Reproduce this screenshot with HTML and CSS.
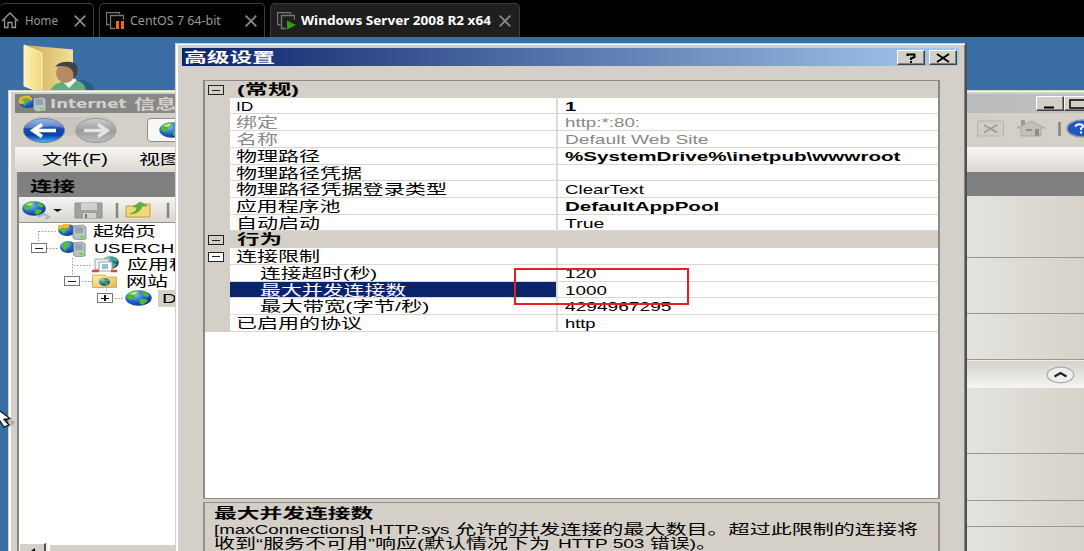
FILE: index.html
```html
<!DOCTYPE html>
<html lang="zh-CN">
<head>
<meta charset="utf-8">
<title>Windows Server 2008 R2 x64</title>
<link rel="stylesheet" href="styles.css">
</head>
<body>
<svg class="defs" width="0" height="0">
  <defs>
    <radialGradient id="globeFill" cx=".35" cy=".3" r=".8"><stop offset="0" stop-color="#8cc8f4"/><stop offset=".5" stop-color="#2469c8"/><stop offset="1" stop-color="#0a2f80"/></radialGradient>
    <linearGradient id="folderFill" x2="1" y2="1"><stop offset="0" stop-color="#fff0a8"/><stop offset="1" stop-color="#e3b94f"/></linearGradient>
    <linearGradient id="flapFill" x2="1" y2="0"><stop offset="0" stop-color="#fff3b4"/><stop offset="1" stop-color="#f0d67c"/></linearGradient>
    <linearGradient id="insideFill" x2="1" y2="0"><stop offset="0" stop-color="#c9a850"/><stop offset="1" stop-color="#f4e09a"/></linearGradient>
    <linearGradient id="backFill" x2="0" y2="1"><stop offset="0" stop-color="#78a5e2"/><stop offset=".45" stop-color="#1549a8"/><stop offset=".7" stop-color="#0b3fae"/><stop offset="1" stop-color="#43c4f5"/></linearGradient>
    <linearGradient id="fwdFill" x2="0" y2="1"><stop offset="0" stop-color="#cfcfcf"/><stop offset=".5" stop-color="#9c9c9c"/><stop offset="1" stop-color="#bdbdbd"/></linearGradient>
    <symbol id="globe" viewBox="0 0 26 16" preserveAspectRatio="none">
      <ellipse cx="13" cy="8" rx="12.700" ry="7.800" fill="url(#globeFill)"/>
      <path d="M2 5Q6 0 12 1L14 3 10 5 9 8 5 10 2 8ZM16 1Q22 2 24 6L20 7 17 5ZM14 9L20 9 22 11 17 15 14 13Z" fill="#4fb83a"/>
      <path d="M4 4Q8 1 13 2L9 5Z" fill="#b8ec8c"/>
    </symbol>
    <symbol id="server" viewBox="0 0 30 17" preserveAspectRatio="none">
      <ellipse cx="10" cy="7" rx="9" ry="6" fill="url(#globeFill)"/>
      <path d="M2 6L8 2 13 3 9 7 7 11Z" fill="#55bd3b"/>
      <path d="M16 3L26 2 29 4V16L20 17 16 15Z" fill="#b9c2c8" stroke="#66727a" stroke-width=".7"/>
      <path d="M18 5H26M18 7H26M18 9H26" stroke="#66727a" stroke-width=".8"/>
      <path d="M23 14H27" stroke="#65e320" stroke-width="2"/>
    </symbol>
    <symbol id="site" viewBox="0 0 25 14" preserveAspectRatio="none">
      <path d="M.5 1H13L15 3H24.500V13.500H.5Z" fill="url(#folderFill)" stroke="#c49a35" stroke-width=".7"/>
    </symbol>
    <symbol id="screens" viewBox="0 0 18 18">
      <path d="M3.500 12.500H.5V.5H13.500V2" fill="none" stroke="#777" stroke-width="1.300"/>
      <path d="M9 16.500H4.500V3.500H17.500V8" fill="none" stroke="#777" stroke-width="1.300"/>
    </symbol>
  </defs>
</svg>

<nav class="tabs">
  <div class="tab home">
    <svg width="18" height="18" viewBox="0 0 18 18"><path d="M1 9L9 1 17 9M3.500 7.500V15.500H7V10.500H11V15.500H14.500V7.500" fill="none" stroke="#999" stroke-width="1.300"/></svg>
    <span class="label l-home"><span data-w="33">Home</span></span>
    <svg class="close" width="12" height="12" viewBox="0 0 12 12"><path d="M.7.7L11.300 11.300M11.300.7L.7 11.300"/></svg>
  </div>
  <div class="tab centos">
    <svg width="18" height="18"><use href="#screens"/><path d="M10 9H13V17H10ZM15 9H18V17H15Z" fill="#f4661b"/></svg>
    <span class="label l-centos"><span data-w="91">CentOS 7 64-bit</span></span>
    <svg class="close" width="12" height="12" viewBox="0 0 12 12"><path d="M.7.7L11.300 11.300M11.300.7L.7 11.300"/></svg>
  </div>
  <div class="tab active">
    <svg width="19" height="18"><use href="#screens" width="18" height="18"/><path d="M10 8.500L19 13 10 17.500Z" fill="#3e9b0d"/></svg>
    <span class="label l-win"><span data-w="190">Windows Server 2008 R2 x64</span></span>
    <svg class="close" width="12" height="12" viewBox="0 0 12 12"><path d="M.7.7L11.300 11.300M11.300.7L.7 11.300"/></svg>
  </div>
</nav>

<main class="desktop">
  <svg class="user-folder" width="75" height="50" viewBox="0 0 75 50">
    <ellipse cx="60" cy="46" rx="13" ry="9" fill="#1d4473" opacity=".45"/>
    <path d="M3 2L52 6.500V50H20Z" fill="url(#insideFill)"/>
    <path d="M3 2L21 10V50L3 43Z" fill="url(#flapFill)" stroke="#fff6cf"/>
    <path d="M29 50Q30 41 41 39L58 38Q65 41 65 50Z" fill="#5fae82"/>
    <path d="M41 38L48 45 56 37 50 34Z" fill="#f2f5ef"/>
    <ellipse cx="44.500" cy="30" rx="9.500" ry="10" fill="#b98a62"/>
    <path d="M34 24Q38 18 50 19 59 21 56 32L52 36Q54 27 47 24 40 22 34 24Z" fill="#40434a"/>
  </svg>

  <section class="iis">
    <header class="iis-title">
      <svg class="title-icon" width="29" height="17"><use href="#server" width="29" height="17"/><path d="M2 8Q1 1 11 2L14 5M2 8L6 7" fill="none" stroke="#f3b421" stroke-width="2.500"/></svg>
      <span class="iis-name"><span data-w="77">Internet</span></span>
      <span class="iis-name zh"><span data-w="64">信息服</span></span>
      <span class="spacer"></span>
      <div class="win-btn"><svg width="26" height="14"><path d="M7 10.500H17" stroke="#000" stroke-width="2"/></svg></div>
      <div class="win-btn"><svg width="26" height="14"><path d="M5 3H22V11H5Z" fill="none" stroke="#000" stroke-width="1.500"/></svg></div>
    </header>
    <div class="nav-row">
      <svg width="98" height="30" viewBox="0 0 98 30">
        <path d="M8 5Q20-1 35 2H65Q80-1 91 5 97 14 90 21L8 20Z" fill="#c9c6bf"/>
        <ellipse cx="22" cy="15.500" rx="20.500" ry="12" fill="url(#backFill)" stroke="#777f91"/>
        <path d="M3 13Q5 4 22 4T41 13Q30 10 22 12T3 13Z" fill="#fff" opacity=".25"/>
        <path d="M34 15.500H12M20 9.500L11 15.500 20 21.500" fill="none" stroke="#fff" stroke-width="3.600"/>
        <ellipse cx="74" cy="15.500" rx="20" ry="12" fill="url(#fwdFill)" stroke="#989898"/>
        <path d="M62 15.500H84M76 9.500L85 15.500 76 21.500" fill="none" stroke="#e4e4e4" stroke-width="3.600"/>
      </svg>
      <div class="address"><svg width="26" height="16"><use href="#globe"/></svg></div>
      <span class="spacer"></span>
      <svg width="107" height="24" viewBox="0 0 107 24">
        <rect x=".5" y="3" width="26" height="15" rx="1" fill="#cfccc5" stroke="#b4b2ae"/>
        <path d="M7 7L20 14.500M20 7L7 14.500" stroke="#9b9b99" stroke-width="1.500"/>
        <path d="M40 10L54 3 68 10H64V18H44V10Z" fill="#c2c0bb" stroke="#a9a8a5"/>
        <path d="M44 2H48V6L44 8Z" fill="#999"/>
        <path d="M49 12H55M59 11V18M61 11V18" stroke="#8e8e8b" stroke-width="2"/>
        <path d="M82.500 4V18" stroke="#858585" stroke-width="2.500"/>
        <ellipse cx="105" cy="10.500" rx="15" ry="8.500" fill="#2255c5" stroke="#909aaa" stroke-width="1.500"/>
        <path d="M98 8.500Q100 5.500 104 6.500T104 10.500V12M104 13.500V15.500" fill="none" stroke="#fff" stroke-width="2"/>
      </svg>
    </div>
    <div class="menu-row">
      <span class="menu-item"><span data-w="66">文件(F)</span></span>
      <span class="menu-item"><span data-w="42">视图</span></span>
    </div>
    <div class="panes">
      <aside class="connections">
        <h2><span data-w="45">连接</span></h2>
        <div class="tools">
          <svg width="155" height="24" viewBox="0 0 155 24">
            <use href="#globe" x="3" y="4" width="24" height="15"/>
            <path d="M19 20L25 17 30 20 26 22" fill="none" stroke="#9fb9c8" stroke-width="2"/>
            <path d="M34 12H43L38.500 15Z" fill="#111"/>
            <path d="M56 6H83V21H56Z" fill="#a0a0a0" stroke="#8f8f8f"/>
            <path d="M62 6H78V13H62ZM64 16H77V21H64Z" fill="#d0d0ce"/>
            <path d="M67 17V21" stroke="#777" stroke-width="2"/>
            <path d="M98 6V21M149 6V21" stroke="#858585" stroke-width="2.500"/>
            <path d="M107 9H118L120 7H131V20H107Z" fill="#f3d77c" stroke="#c49b36"/>
            <path d="M111 17Q118 15 118 10H114L121 5 128 9H123Q122 16 111 17Z" fill="#54b835" stroke="#3c8c26" stroke-width=".5"/>
          </svg>
        </div>
        <ul class="tree">
          <li class="n1"><svg width="30" height="17"><use href="#server"/><path d="M1 6V2H5L7 1H13L11 5H4L2 7Z" fill="#f5b52c"/></svg><span class="node"><span data-w="63">起始页</span></span></li>
          <li class="n2"><i class="box minus"></i><svg width="27" height="17"><use href="#server"/></svg><span class="node"><span data-w="86">USERCHI</span></span></li>
          <li class="n3"><svg width="27" height="17" viewBox="0 0 27 17"><use href="#globe" x="10" width="17" height="13"/><path d="M3 3H17V14H3Z" fill="#edf1f5" stroke="#9aa6b4"/><path d="M7 6H20V15H7Z" fill="#fff" stroke="#9aa6b4"/><path d="M10 8H16V13H10Z" fill="#9dbcd9"/><path d="M0 15H7M19 15H25" stroke="#cf4c3e" stroke-width="2.500"/></svg><span class="node"><span data-w="84">应用程序</span></span></li>
          <li class="n4"><i class="box minus"></i><svg width="25" height="14"><use href="#site"/><use href="#globe" x="7" y="4" width="11" height="8"/></svg><span class="node"><span data-w="42">网站</span></span></li>
          <li class="n5"><i class="box plus"></i><svg width="27" height="16"><use href="#globe"/></svg><span class="node sel"><span data-w="65">Default</span></span></li>
        </ul>
        <svg class="branches" width="120" height="85"><path d="M19.500 9V19M20 9.500H38M28 26.500H40M53.500 36V54M55 43.500H72M63 59.500H73M87.500 65V69M96 76.500H105" fill="none" stroke="#999" stroke-dasharray="1.500 1.500"/></svg>
        <div class="scroll"><div class="arrow"><svg width="24" height="10"><path d="M15 4V10H7Z"/></svg></div><div class="track"></div></div>
      </aside>
      <aside class="actions">
        <div class="band"></div>
        <div class="cell c1"></div>
        <div class="cell c2"></div>
        <div class="cell c3"></div>
        <div class="group"><svg width="29" height="18"><ellipse cx="14.500" cy="9" rx="13.300" ry="7.800" fill="#eee" stroke="#aaa" stroke-width="1.300"/><path d="M8.500 10.500L14.500 7 20.500 10.500" fill="none" stroke="#222" stroke-width="2.200"/></svg></div>
        <div class="cell c4"></div>
        <div class="cell c5"></div>
        <div class="cell c6"></div>
        <div class="cell c7"></div>
      </aside>
    </div>
  </section>

  <section class="dialog">
    <header class="dialog-title">
      <span class="caption"><span data-w="91">高级设置</span></span>
      <div class="win-btn"><svg width="26" height="14"><path d="M9.500 5V3.500H16.500V6L13 7.500V9M13 10V12" fill="none" stroke="#000" stroke-width="2"/></svg></div>
      <div class="win-btn gap"><svg width="26" height="14"><path d="M7 3L19 11M19 3L7 11" stroke="#000" stroke-width="2"/></svg></div>
    </header>
    <div class="grid">
      <div class="row head"><i class="box minus"></i><b><span data-w="62">(常规)</span></b></div>
      <div class="row"><i></i><span class="k"><span data-w="18">ID</span></span><span class="v bold"><span data-w="11">1</span></span></div>
      <div class="row dim"><i></i><span class="k"><span data-w="42">绑定</span></span><span class="v"><span data-w="75">http:*:80:</span></span></div>
      <div class="row dim"><i></i><span class="k"><span data-w="42">名称</span></span><span class="v"><span data-w="143">Default Web Site</span></span></div>
      <div class="row"><i></i><span class="k"><span data-w="84">物理路径</span></span><span class="v bold"><span data-w="336">%SystemDrive%\inetpub\wwwroot</span></span></div>
      <div class="row"><i></i><span class="k"><span data-w="126">物理路径凭据</span></span><span class="v"></span></div>
      <div class="row"><i></i><span class="k"><span data-w="211">物理路径凭据登录类型</span></span><span class="v"><span data-w="79">ClearText</span></span></div>
      <div class="row"><i></i><span class="k"><span data-w="105">应用程序池</span></span><span class="v bold"><span data-w="155">DefaultAppPool</span></span></div>
      <div class="row"><i></i><span class="k"><span data-w="84">自动启动</span></span><span class="v"><span data-w="39">True</span></span></div>
      <div class="row head"><i class="box minus"></i><b><span data-w="45">行为</span></b></div>
      <div class="row"><i class="box minus white"></i><span class="k"><span data-w="84">连接限制</span></span><span class="v"></span></div>
      <div class="row sub"><i></i><span class="k"><span data-w="118">连接超时(秒)</span></span><span class="v"><span data-w="32">120</span></span></div>
      <div class="row sub selected"><i></i><span class="k"><span data-w="147">最大并发连接数</span></span><span class="v"><span data-w="42">1000</span></span></div>
      <div class="row sub"><i></i><span class="k"><span data-w="169">最大带宽(字节/秒)</span></span><span class="v"><span data-w="106">4294967295</span></span></div>
      <div class="row"><i></i><span class="k"><span data-w="126">已启用的协议</span></span><span class="v"><span data-w="31">http</span></span></div>
    </div>
    <div class="help">
      <div class="line strong"><span data-w="160">最大并发连接数</span></div>
      <div class="line"><span class="seg s1"><span data-w="235">[maxConnections] HTTP.sys</span></span><span class="seg"><span data-w="463">允许的并发连接的最大数目。超过此限制的连接将</span></span></div>
      <div class="line"><span class="seg s2"><span data-w="336">收到“服务不可用”响应(默认情况下为</span></span><span class="seg s3"><span data-w="86">HTTP 503</span></span><span class="seg"><span data-w="66">错误)。</span></span></div>
    </div>
  </section>

  <div class="highlight"></div>
  <svg class="pointer" width="16" height="24" viewBox="0 0 16 24"><path d="M4 9L15 14 9 20Z" fill="#38424b" opacity=".3"/><path d="M-8-3L10 10.500 4 11.500 9 17 4 19 0 13-8 17Z" fill="#fff" stroke="#111" stroke-width="1.300"/></svg>
</main>
<script src="fit.js"></script>
</body>
</html>
```
FILE: styles.css
```css
* { box-sizing: border-box; }
body { margin: 0; width: 1084px; height: 551px; overflow: hidden; background: #000; color: #000; font: 13px/17px "Liberation Sans", "Noto Sans CJK SC", sans-serif; }
svg { display: block; flex: none; }
.defs { position: absolute; }
[data-w] { display: inline-block; white-space: pre; transform-origin: 0 50%; }
.spacer { flex: 1; }

.tabs { display: flex; height: 37px; padding-top: 3px; background: #000; }
.tab { display: flex; align-items: center; height: 34px; border: 1px solid #3c3c3c; border-bottom: 0; border-radius: 5px 5px 0 0; color: #999; font-family: "Noto Sans", sans-serif; }
.home { width: 94px; border-left: 0; padding-left: 1px; }
.centos { width: 166px; margin-left: 5px; padding-left: 6px; }
.active { width: 250px; margin-left: 5px; padding-left: 6px; background: #1f1f1f; color: #fff; font-weight: 700; }
.label { flex: none; overflow: hidden; white-space: nowrap; }
.l-home { width: 42px; margin: 0 7px 0 6px; }
.l-centos { width: 110px; margin: 0 5px 0 6px; }
.l-win { width: 192px; margin: 0 6px 0 5px; }
.close path { stroke: #8c8c8c; stroke-width: 1.7; }

.desktop { position: relative; height: 514px; overflow: hidden; background: #3a6ea5; }
.user-folder { position: absolute; left: 21px; top: 6px; }

.iis { position: absolute; left: 8px; top: 53px; width: 1090px; height: 480px; padding: 4px 0 0 7px; background: #d4d0c8; box-shadow: inset 1px 1px #d4d0c8, inset 3px 2px #fff; }
.iis-title { display: flex; align-items: center; height: 19px; padding-right: 6px; background: linear-gradient(90deg, #808080, #c2c2c2); color: #d4d0c8; }
.title-icon { margin-left: 3px; }
.iis-name { width: 84px; margin-left: 3px; overflow: visible; font: 700 12.5px/18px "DejaVu Sans", sans-serif; }
.iis-name.zh { margin-left: 0; font: 700 14px/17px "Noto Sans CJK SC", sans-serif; }
.win-btn { flex: none; width: 28px; height: 15px; background: #d4d0c8; border: 1px solid; border-color: #fff #404040 #404040 #fff; box-shadow: inset -1px -1px #808080; }
.nav-row { display: flex; align-items: center; height: 34px; padding: 0 14px 0 7px; }
.address { display: flex; align-items: center; width: 300px; height: 24px; margin-left: 27px; padding-left: 11px; background: #f8f8f7; border: 1px solid #8c8c8c; border-radius: 4px; }
.menu-row { display: flex; align-items: center; height: 25px; padding-left: 27px; background: linear-gradient(#f7f6f4, #dcd9d2); font-size: 14px; }
.menu-item { width: 97px; }
.panes { display: flex; justify-content: space-between; height: 398px; }
.connections { position: relative; width: 170px; margin-left: 2px; border-left: 2px solid #858585; display: flex; flex-direction: column; }
.connections h2 { margin: 0; height: 25px; padding-left: 11px; background: #808080; font-size: 14px; line-height: 28px; }
.tools { height: 26px; background: linear-gradient(#f6f5f3, #d9d6cf); border-bottom: 1px solid #929292; }
.tree { margin: 0; padding: 0; height: 320px; list-style: none; background: #fff; font-size: 14px; line-height: 17px; }
.tree li { display: flex; align-items: center; height: 16.7px; }
.tree .box { margin-right: 12px; }
.node { width: 80px; margin-left: 6px; height: 17px; }
.n1 { padding-left: 38px; }
.n2 { padding-left: 12px; }
.n2 svg { margin-right: 2px; }
.n3 { padding-left: 73px; }
.n3 .node { margin-left: 8px; }
.n4 { padding-left: 45px; }
.n4 .node { margin-left: 9px; }
.n5 { padding-left: 78px; }
.n5 .node { padding-left: 4px; background: #d4d0c8; }
.n2 .node, .n5 .node { font-size: 13.5px; }
.branches { position: absolute; left: 0; top: 50px; }
.scroll { display: flex; height: 20px; background: #f3f1ec; }
.arrow { width: 27px; background: #d4d0c8; border: 1px solid #fff; border-right: 2px solid #505050; }
.track { flex: 1; margin-left: 2px; border: 2px solid #fff; background: #d4d0c8; }
.actions { width: 135px; }
.band { height: 24px; background: #808080; }
.cell { background: linear-gradient(90deg, #e4e3de, #d5d1c8); border-bottom: 1px solid #989895; }
.c1 { height: 62px; } .c2 { height: 56px; } .c3 { height: 46px; }
.c4 { height: 66px; } .c5 { height: 47px; } .c6 { height: 26px; } .c7 { height: 40px; }
.group { display: flex; justify-content: flex-end; align-items: center; height: 28px; padding-right: 23px; background: linear-gradient(#d5d2ca, #f6f5f3); border-top: 1px solid #eee; }

.dialog { position: absolute; left: 175px; top: 6px; width: 792px; height: 530px; padding: 5px 6px 0 7px; background: #d4d0c8; border-right: 2px solid #505050; box-shadow: inset 1px 1px #d4d0c8, inset 3px 2px #fff, inset -1px 0 #858585; }
.dialog-title { display: flex; align-items: center; height: 18px; padding-right: 2px; background: linear-gradient(90deg, #0a246a, #a6caf0); color: #fff; }
.caption { flex: 1; height: 18px; padding-left: 2px; font: 700 14px/17px "Noto Sans CJK SC", sans-serif; }
.gap { margin-left: 4px; }
.grid { width: 737px; height: 419px; margin: 14px 0 0 21px; padding: 0; background: #fff; border: solid #8a8a8a; border-width: 1px 2px 1px 2px; }
.row { display: grid; grid-template-columns: 24.5px 328.5px 1fr; height: 16.73px; background: #d4d0c8; font-size: 13px; line-height: 17.5px; }
.row > i { align-self: center; }
.row b { font-size: 13.5px; padding-left: 7px; line-height: 18px; }
.k, .v { height: 16.73px; padding-left: 7px; background: #fff; border-bottom: 1px solid #dad7cf; }
.k { font-size: 13.5px; padding-left: 6.5px; border-right: 2px solid #dedbd4; }
.bold { font-weight: 700; }
.dim { color: #888; }
.sub .k { padding-left: 30.5px; }
.selected .k { background: #0a246a; color: #fff; }
.box { display: block; flex: none; width: 16px; height: 10px; border: 1.5px solid #222; background: linear-gradient(#222, #222) center / 8px 1px no-repeat; }
.row .box { margin-left: 3px; }
.row .white { background-color: #fff; }
.tree .box { border: 1px solid #777; background-color: #fff; }
.tree .plus { background: linear-gradient(#111, #111) center / 8px 1px no-repeat, linear-gradient(#111, #111) center / 2px 6px no-repeat #fff; }
.help { width: 737px; height: 80px; margin: 3px 0 0 21px; padding: 3px 0 0 8.5px; border: 2px solid #929292; border-bottom: 0; border-top-width: 1px; font-size: 13.5px; }
.line { display: flex; height: 14px; line-height: 17px; white-space: nowrap; }
.strong { font-weight: 700; height: 14.5px; line-height: 16px; }
.seg { width: 200px; flex: none; }
.s1 { width: 241px; } .s2 { width: 344px; } .s3 { width: 92px; }

.highlight { position: absolute; left: 514px; top: 231px; width: 175px; height: 37px; border: 2px solid #ed1c24; }
.pointer { position: absolute; left: 0; top: 371px; }
```
FILE: fit.js
```js
// Stretch each label horizontally to the width of its scaled display.
document.querySelectorAll('[data-w]').forEach(function (el) {
  el.style.transform = 'scaleX(' + (el.dataset.w / el.offsetWidth) + ')';
});
```
